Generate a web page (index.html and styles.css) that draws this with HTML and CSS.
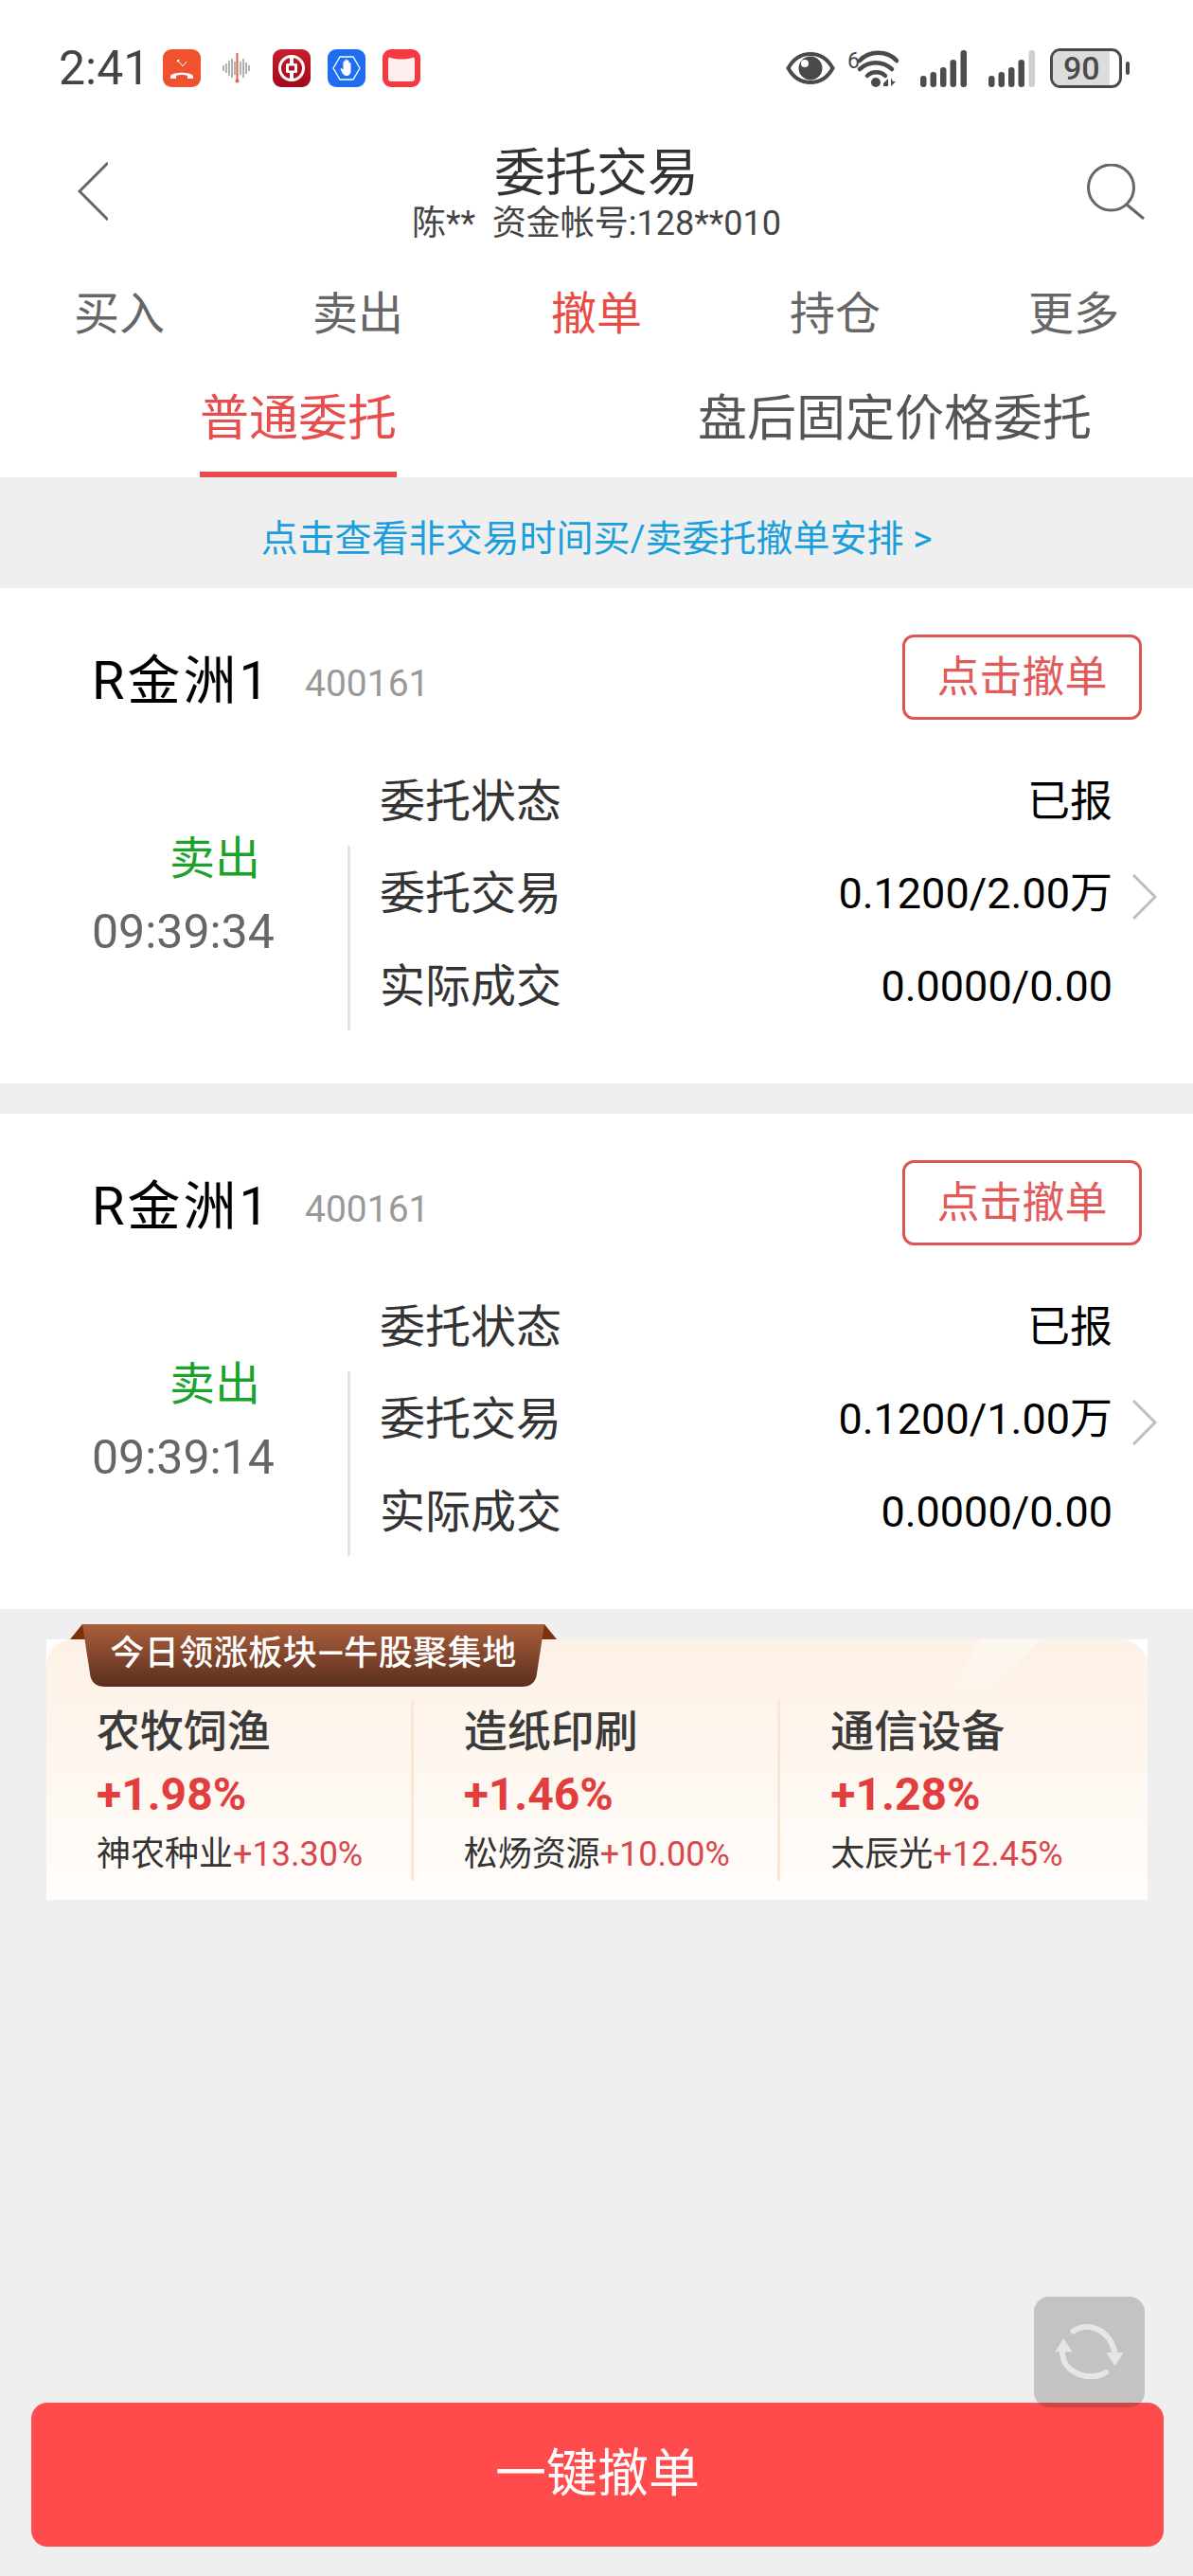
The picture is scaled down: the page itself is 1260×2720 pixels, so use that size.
FILE: index.html
```html
<!DOCTYPE html>
<html>
<head>
  <title>委托交易</title>
  <meta charset="UTF-8">
  <link rel="stylesheet" href="styles.css">
</head>
<body>
  <div class="page">
    <div class="top">
      <!-- status bar -->
      <div class="status">
        <div class="status-left">
          <span class="time">2:41</span>
          <svg class="app-icon" viewBox="0 0 40 40"><rect width="40" height="40" rx="9" fill="#f0522f"/><path d="M8 30v-2c3-4.500 21-4.500 24 0v2c0 .8-.5 1-1 1h-4c-.6 0-1-.4-1-1v-2c-3-1.200-9-1.200-12 0v2c0 .6-.4 1-1 1H9c-.5 0-1-.2-1-1z" fill="#fff"/><path d="M16 12l5 6 4-5" fill="none" stroke="#fff" stroke-width="1"/><path d="M15 11h3L15 14z" fill="#fff"/></svg>
          <svg class="voice" viewBox="0 0 30 32"><g stroke="#999" stroke-width="1.500"><path d="M1 13v6M4 11v10M7 8v16M10 6v20M13 9v14M19 9v14M22 6v20M25 10v12M28 13v6"/></g><path d="M15.500 0v30" stroke="#d9614c" stroke-width="2"/><circle cx="15.500" cy="29.500" r="2" fill="#d9614c"/></svg>
          <svg class="app-icon" viewBox="0 0 40 40"><defs><linearGradient id="bank" x1="0" y1="0" x2="0" y2="1"><stop offset="0" stop-color="#c8202f"/><stop offset="1" stop-color="#a00a1a"/></linearGradient></defs><rect width="40" height="40" rx="9" fill="url(#bank)"/><circle cx="20" cy="20" r="12.500" fill="none" stroke="#fff" stroke-width="3"/><path d="M20 8v24" stroke="#fff" stroke-width="4"/><rect x="14" y="15" width="12" height="10" rx="1.500" fill="#fff"/><rect x="17" y="17.500" width="6" height="5" fill="#b01525"/></svg>
          <svg class="app-icon" viewBox="0 0 40 40"><rect width="40" height="40" rx="9" fill="#1f6ef0"/><path d="M6 20l7-12h14l7 12-7 12H13z" fill="none" stroke="#fff" stroke-width="1.300"/><path d="M14.500 20l2 1.500v-8a1 1 0 0 1 2 0v-2a1 1 0 0 1 2 0v1a1 1 0 0 1 2 0v2.500a1 1 0 0 1 2 0V23c0 3-2 5-4.500 5-3 0-4-2-6.500-7z" fill="#fff"/></svg>
          <svg class="app-icon" viewBox="0 0 40 40"><rect width="40" height="40" rx="9" fill="#f23a40"/><path d="M6 11c0-2 1-3 3-2 7 2 15 2 22 0 2-1 3 0 3 2v20c0 2-1 3-3 3H9c-2 0-3-1-3-3z" fill="#fdeeee"/></svg>
        </div>
        <div class="status-right">
          <svg class="eye" viewBox="0 0 52 36"><path d="M2.500 18C8 8 16 3 26 3s18 5 23.500 15C44 28 36 33 26 33S8 28 2.500 18z" fill="none" stroke="#4a4a4a" stroke-width="4"/><circle cx="26" cy="18" r="12.500" fill="#4a4a4a"/><circle cx="20" cy="13" r="4" fill="#fff"/></svg>
          <svg class="wifi" viewBox="0 0 54 40"><text x="0" y="20" class="wifi-six">6</text><g fill="none" stroke="#4a4a4a" stroke-width="4.500" stroke-linecap="round"><path d="M13 12c10-11 29-11 39 0"/><path d="M13 22c10-9 24-9 34 0" transform="translate(0 -1)"/><path d="M21 30c5-5 14-5 19 0" transform="translate(0 -2)"/></g><circle cx="30" cy="35" r="5" fill="#4a4a4a"/><path d="M38 36l5-5v8h-5zM46 30v9l5-5h-3z" fill="#4a4a4a"/></svg>
          <svg class="signal" viewBox="0 0 49 40"><g fill="#4d4d4d"><rect x="0" y="28" width="6.500" height="12" rx="3"/><rect x="10.500" y="24" width="6.500" height="16" rx="3"/><rect x="21" y="19" width="6.500" height="21" rx="3"/><rect x="31.500" y="11" width="6.500" height="29" rx="3"/><rect x="42.500" y="1" width="6.500" height="39" rx="3"/></g></svg>
          <svg class="signal" viewBox="0 0 49 40"><g fill="#4d4d4d"><rect x="0" y="28" width="6.500" height="12" rx="3"/><rect x="10.500" y="24" width="6.500" height="16" rx="3"/><rect x="21" y="19" width="6.500" height="21" rx="3"/><rect x="31.500" y="11" width="6.500" height="29" rx="3"/></g><rect x="42.500" y="1" width="6.500" height="39" rx="3" fill="#cfcfcf"/></svg>
          <div class="battery-wrap">
            <div class="battery"><span class="battery-fill"></span><span class="battery-num">90</span></div>
            <span class="battery-tip"></span>
          </div>
        </div>
      </div>

      <div class="title-bar">
        <svg class="back" viewBox="0 0 32 62"><path d="M32 1L2 31l30 30" fill="none" stroke="#666" stroke-width="3"/></svg>
        <div class="title-text">
          <div class="title">委托交易</div>
          <div class="subtitle">陈**&nbsp;&nbsp;资金帐号:128**010</div>
        </div>
        <svg class="search" viewBox="0 0 61 59"><circle cx="25.500" cy="25" r="24" fill="none" stroke="#666" stroke-width="3"/><path d="M42 43l18 15" stroke="#666" stroke-width="3"/></svg>
      </div>

      <div class="tabs">
        <div class="tab">买入</div>
        <div class="tab">卖出</div>
        <div class="tab active">撤单</div>
        <div class="tab">持仓</div>
        <div class="tab">更多</div>
      </div>

      <div class="subtabs">
        <div class="subtab"><span class="subtab-label active">普通委托</span></div>
        <div class="subtab"><span class="subtab-label">盘后固定价格委托</span></div>
      </div>
    </div>

    <div class="notice">点击查看非交易时间买/卖委托撤单安排 &gt;</div>

    <div class="order">
      <div class="order-head">
        <span class="stock-name">R金洲1</span>
        <span class="stock-code">400161</span>
        <button class="cancel-btn">点击撤单</button>
      </div>
      <div class="order-body">
        <div class="order-side">
          <div class="side-type">卖出</div>
          <div class="side-time">09:39:34</div>
        </div>
        <div class="side-line"></div>
        <div class="order-rows">
          <div class="row"><span class="row-label">委托状态</span><span class="row-value">已报</span></div>
          <div class="row"><span class="row-label">委托交易</span><span class="row-value">0.1200/2.00万</span><svg class="chevron" viewBox="0 0 26 48"><path d="M1 1l23 23L1 47" fill="none" stroke="#bdbdbd" stroke-width="3"/></svg></div>
          <div class="row"><span class="row-label">实际成交</span><span class="row-value">0.0000/0.00</span></div>
        </div>
      </div>
    </div>

    <div class="order">
      <div class="order-head">
        <span class="stock-name">R金洲1</span>
        <span class="stock-code">400161</span>
        <button class="cancel-btn">点击撤单</button>
      </div>
      <div class="order-body">
        <div class="order-side">
          <div class="side-type">卖出</div>
          <div class="side-time">09:39:14</div>
        </div>
        <div class="side-line"></div>
        <div class="order-rows">
          <div class="row"><span class="row-label">委托状态</span><span class="row-value">已报</span></div>
          <div class="row"><span class="row-label">委托交易</span><span class="row-value">0.1200/1.00万</span><svg class="chevron" viewBox="0 0 26 48"><path d="M1 1l23 23L1 47" fill="none" stroke="#bdbdbd" stroke-width="3"/></svg></div>
          <div class="row"><span class="row-label">实际成交</span><span class="row-value">0.0000/0.00</span></div>
        </div>
      </div>
    </div>

    <div class="promo">
      <div class="promo-inner">
        <div class="sector">
          <div class="sector-name">农牧饲渔</div>
          <div class="sector-pct">+1.98%</div>
          <div class="sector-stock">神农种业<span class="sector-up">+13.30%</span></div>
        </div>
        <div class="sector">
          <div class="sector-name">造纸印刷</div>
          <div class="sector-pct">+1.46%</div>
          <div class="sector-stock">松炀资源<span class="sector-up">+10.00%</span></div>
        </div>
        <div class="sector">
          <div class="sector-name">通信设备</div>
          <div class="sector-pct">+1.28%</div>
          <div class="sector-stock">太辰光<span class="sector-up">+12.45%</span></div>
        </div>
      </div>
      <!-- ribbon sits over the top edge of the card -->
      <div class="ribbon">
        <svg class="ribbon-bg" viewBox="0 0 514 66"><defs><linearGradient id="rib" x1="0" y1="0" x2="0" y2="1"><stop offset="0" stop-color="#ab5f3d"/><stop offset="1" stop-color="#5a2e1d"/></linearGradient></defs><path d="M0 16L13 0h6v16zM514 16L501 0h-6v16z" fill="#7d300c"/><path d="M13 0h488l-8 52c-1 9-6 14-16 14H37c-10 0-15-5-16-14z" fill="url(#rib)"/></svg>
        <span class="ribbon-text">今日领涨板块—牛股聚集地</span>
      </div>
    </div>

    <div class="spacer"></div>
    <button class="cancel-all">一键撤单</button>

    <div class="refresh">
      <svg viewBox="0 0 117 117"><g fill="none" stroke="#e6e6e6" stroke-width="6" stroke-linecap="round"><path d="M41.500 36.500C57 26 80 34 85.500 60"/><path d="M30 58c0 24 30 32 46 22"/></g><path d="M76.300 59h18.300l-9 14.300zM22.300 58.300h18.300l-9.300-14z" fill="#e6e6e6"/></svg>
    </div>
  </div>
</body>
</html>
```

FILE: styles.css
```css
* {
  box-sizing: border-box;
}

body {
  margin: 0;
  font-family: Roboto, "Noto Sans CJK SC", sans-serif;
  color: #333;
  background-color: #efefef;
}

.page {
  position: relative;
  display: flex;
  flex-direction: column;
  width: 1260px;
  height: 2720px;
  overflow: hidden;
}

.top {
  background-color: #fff;
}

/* status bar */
.status {
  display: flex;
  align-items: center;
  justify-content: space-between;
  height: 144px;
  padding: 0 67px 0 62px;
}

.status-left {
  display: flex;
  align-items: center;
  gap: 18px;
}

.time {
  width: 92px;
  font-size: 50px;
  color: #444;
}

.app-icon {
  width: 40px;
  height: 40px;
}

.voice {
  width: 30px;
  height: 32px;
  margin: 0 5px;
}

.status-right {
  display: flex;
  align-items: center;
  gap: 13px;
}

.eye {
  width: 52px;
  height: 36px;
}

.wifi {
  width: 54px;
  height: 40px;
}

.wifi-six {
  font-size: 23px;
  fill: #4a4a4a;
}

.signal {
  width: 49px;
  height: 40px;
  margin-left: 10px;
}

.battery-wrap {
  display: flex;
  align-items: center;
  gap: 4px;
  margin-left: 3px;
}

.battery {
  position: relative;
  width: 76px;
  height: 42px;
  border: 3px solid #4a4a4a;
  border-radius: 11px;
}

.battery-fill {
  position: absolute;
  top: 0;
  left: 0;
  bottom: 0;
  width: 85%;
  border-radius: 8px 0 0 8px;
  background-color: #dcdcdc;
}

.battery-num {
  position: absolute;
  top: 0;
  left: 11px;
  font-size: 34px;
  line-height: 36px;
  font-weight: 500;
  color: #4a4a4a;
}

.battery-tip {
  width: 4px;
  height: 14px;
  border-radius: 2px;
  background-color: #4a4a4a;
}

/* title */
.title-bar {
  display: grid;
  grid-template-columns: 1fr auto 1fr;
  align-items: center;
  height: 110px;
}

.back {
  width: 32px;
  height: 62px;
  margin: 6px 0 0 82px;
}

.title-text {
  text-align: center;
}

.title {
  padding-top: 6px;
  font-size: 54px;
  line-height: 68px;
}

.subtitle {
  font-size: 36px;
  line-height: 36px;
  color: #444;
}

.search {
  justify-self: end;
  width: 61px;
  height: 59px;
  margin: 6px 51px 0 0;
}

.tabs {
  display: grid;
  grid-template-columns: repeat(5, 1fr);
  margin-top: 28px;
}

.tab {
  font-size: 48px;
  line-height: 100px;
  text-align: center;
  color: #666;
}

.tab.active {
  color: #e84d45;
}

.subtabs {
  display: grid;
  grid-template-columns: 1fr 1fr;
  text-align: center;
}

.subtab-label {
  display: inline-block;
  height: 122px;
  padding-top: 5px;
  font-size: 52px;
  line-height: 111px;
  color: #555;
}

.subtab-label.active {
  color: #e84d4d;
  border-bottom: 6px solid #e84d4d;
}

.notice {
  height: 117px;
  padding-top: 2px;
  font-size: 39px;
  line-height: 127px;
  text-align: center;
  color: #1b9fdc;
}

/* orders */
.order {
  padding: 49px 0 53px;
  background-color: #fff;
}

.order + .order {
  margin-top: 32px;
}

.order-head {
  display: flex;
  align-items: center;
  height: 90px;
  padding: 0 54px 0 97px;
}

.stock-name {
  margin-bottom: 4px;
  font-size: 56px;
  letter-spacing: 3px;
  color: #000;
}

.stock-code {
  margin: 14px auto 0 35px;
  font-size: 39px;
  color: #999;
}

.cancel-btn {
  width: 253px;
  height: 90px;
  padding: 0 0 8px;
  font-family: inherit;
  font-size: 45px;
  color: #e25a5a;
  background: none;
  border: 3px solid #dd5555;
  border-radius: 12px;
}

.order-body {
  display: flex;
  height: 295px;
  margin-top: 36px;
}

.order-side {
  width: 367px;
  padding-top: 87px;
}

.side-type {
  padding-left: 179px;
  font-size: 48px;
  line-height: 48px;
  color: #1aa32a;
}

.side-time {
  margin-top: 23px;
  padding-left: 97px;
  font-size: 50px;
  line-height: 60px;
  color: #666;
}

.side-line {
  align-self: flex-end;
  width: 3px;
  height: 195px;
  margin-bottom: 3px;
  background-color: #e2e2e2;
}

.order-rows {
  flex: 1;
  margin-left: 31px;
  padding-right: 38px;
}

.row {
  display: grid;
  grid-template-columns: 1fr auto 26px;
  column-gap: 21px;
  align-items: center;
  height: 97.500px;
}

.row-label {
  padding-top: 4px;
  font-size: 48px;
  line-height: 60px;
}

.row-value {
  padding-top: 4px;
  font-size: 45px;
  line-height: 60px;
  color: #000;
}

.chevron {
  width: 26px;
  height: 48px;
  margin-top: 10px;
}

/* promo card */
.promo {
  position: relative;
  height: 275px;
  margin: 32px 48px 0 49px;
  background-color: #fff;
}

.promo-inner {
  position: relative;
  display: grid;
  grid-template-columns: repeat(3, 1fr);
  height: 100%;
  padding-top: 65px;
  border-radius: 28px 28px 0 0;
  background: linear-gradient(#fdf1e5, #fffdfb);
}

.promo-inner::after {
  content: "";
  position: absolute;
  top: 0;
  left: 950px;
  width: 100px;
  height: 60px;
  background: linear-gradient(rgba(255,255,255,0.5), rgba(255,255,255,0));
  clip-path: polygon(37% 0, 100% 0, 40% 100%, 0 100%);
}

.sector {
  height: 190px;
  padding-left: 53px;
  border-right: 3px solid #fae6d4;
}

.sector:last-child {
  border-right: none;
}

.sector-name {
  padding-top: 2px;
  font-size: 46px;
  font-weight: 500;
  line-height: 60px;
  color: #3a3a3a;
}

.sector-pct {
  margin-top: 9px;
  font-size: 48px;
  font-weight: 700;
  line-height: 56px;
  color: #e23e3e;
}

.sector-stock {
  margin-top: 13px;
  font-size: 36px;
  line-height: 44px;
}

.sector-up {
  color: #d9474c;
}

.ribbon {
  position: absolute;
  top: -16px;
  left: 25px;
  width: 514px;
  height: 66px;
  text-align: center;
}

.ribbon-bg {
  position: absolute;
  top: 0;
  left: 0;
  width: 514px;
  height: 66px;
}

.ribbon-text {
  position: relative;
  font-size: 36px;
  font-weight: 500;
  letter-spacing: 0.500px;
  line-height: 62px;
  color: #fff;
}

/* bottom */
.spacer {
  flex: 1;
}

.cancel-all {
  height: 152px;
  margin: 0 31px 31px 33px;
  padding: 0 0 12px;
  font-family: inherit;
  font-size: 54px;
  color: #fff;
  background-color: #ff4b4b;
  border: none;
  border-radius: 17px;
}

.refresh {
  position: absolute;
  top: 2425px;
  left: 1092px;
  width: 117px;
  height: 117px;
  border-radius: 16px;
  background-color: rgba(64,64,64,0.25);
}

.refresh svg {
  display: block;
  width: 117px;
  height: 117px;
}
```
